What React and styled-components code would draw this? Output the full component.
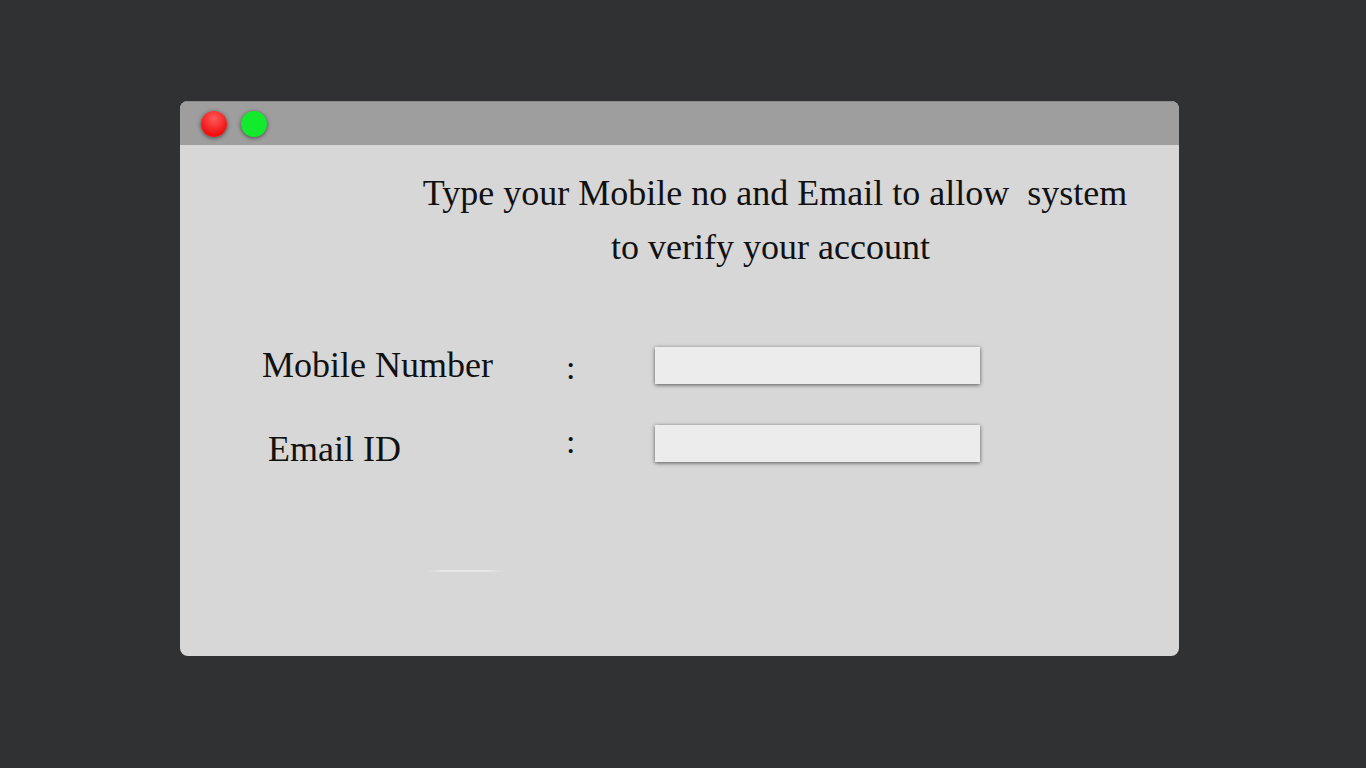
import React from "react";
import styled, { createGlobalStyle } from "styled-components";

const Global = createGlobalStyle`
  html, body { margin: 0; padding: 0; background: #303133; }
  body { font-family: "Liberation Serif", "Times New Roman", serif; }
`;

const Page = styled.div`
  width: 1366px;
  height: 768px;
  display: flex;
  align-items: flex-start;
  justify-content: flex-start;
  padding: 101px 0 0 180px;
  box-sizing: border-box;
`;

const Window = styled.div`
  width: 999px;
  height: 555px;
  border-radius: 8px;
  overflow: hidden;
  background: #d7d7d7;
  display: flex;
  flex-direction: column;
`;

const TitleBar = styled.div`
  height: 44px;
  flex: none;
  background: #9e9e9e;
  border-top: 1px solid #8c8c8c;
  box-sizing: border-box;
  display: flex;
  align-items: center;
  gap: 14px;
  padding-left: 21px;
`;

const Dot = styled.span`
  width: 26px;
  height: 26px;
  border-radius: 50%;
  background: ${(p) => p.$bg};
  box-shadow: 0 1px 4px rgba(0, 0, 0, 0.55);
`;

const Body = styled.div`
  flex: 1;
  display: flex;
  flex-direction: column;
  color: #111;
`;

const Heading = styled.p`
  margin: 21px 0 0 240px;
  width: 710px;
  text-align: center;
  font-size: 36px;
  line-height: 54px;
  white-space: pre;
`;

const Form = styled.div`
  margin-top: 73px;
  display: grid;
  grid-template-columns: 304px 89px 325px;
  row-gap: 41px;
  padding-left: 82px;
`;

const Label = styled.div`
  font-size: 36px;
  line-height: 37px;
  padding-left: ${(p) => p.$indent || 0}px;
  transform: translateY(${(p) => p.$shift || 0}px);
`;

const Colon = styled.div`
  font-size: 34px;
  line-height: 37px;
  transform: translateY(${(p) => p.$shift || 0}px);
`;

const Input = styled.input`
  width: 325px;
  height: 37px;
  box-sizing: border-box;
  border: none;
  background: #ececec;
  box-shadow: 0 1px 4px rgba(0, 0, 0, 0.6);
  outline: none;
`;

const Divider = styled.div`
  margin: 108px 0 0 247px;
  width: 76px;
  height: 2px;
  background: linear-gradient(to right, rgba(236,236,236,0), #e6e6e6 20%, #e6e6e6 80%, rgba(236,236,236,0));
`;

export default function App() {
  return (
    <>
      <Global />
      <Page>
        <Window>
          <TitleBar>
            <Dot $bg="radial-gradient(circle at 50% 30%, #ff5a5a, #f01010 70%)" />
            <Dot $bg="#13ea2e" />
          </TitleBar>
          <Body>
            <Heading>{"Type your Mobile no and Email to allow  system\nto verify your account "}</Heading>
            <Form>
              <Label>Mobile Number</Label>
              <Colon $shift={2}>:</Colon>
              <Input type="text" />
              <Label $indent={6} $shift={6}>Email ID</Label>
              <Colon $shift={-2}>:</Colon>
              <Input type="text" />
            </Form>
            <Divider />
          </Body>
        </Window>
      </Page>
    </>
  );
}
